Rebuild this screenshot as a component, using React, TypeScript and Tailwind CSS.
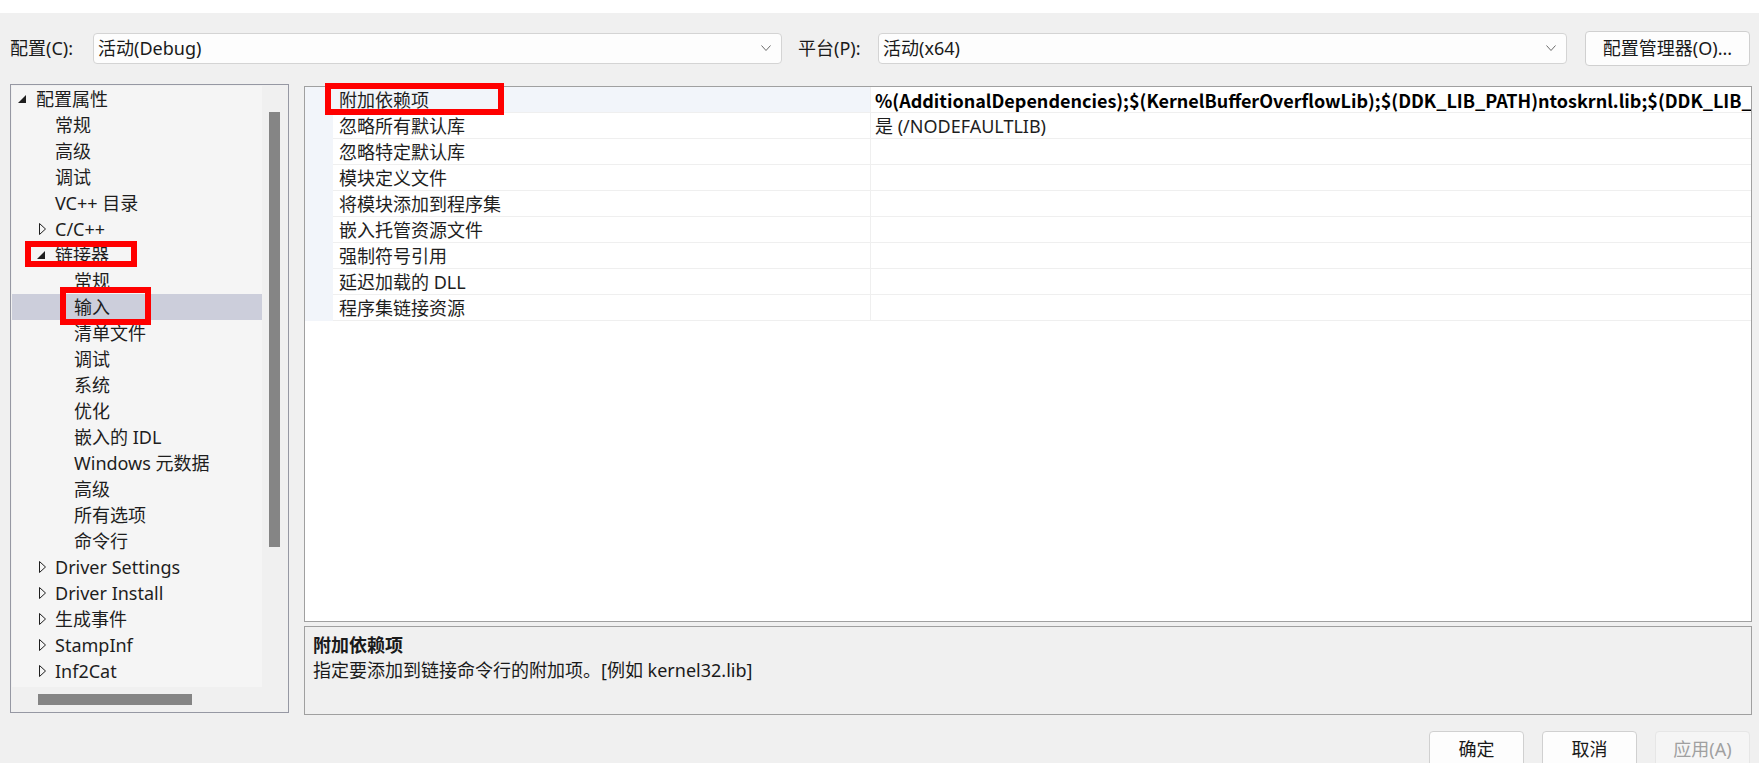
import React from 'react';

type TreeNode = {
  label: string;
  level: 0 | 1 | 2;
  expander?: 'open' | 'closed';
  selected?: boolean;
};

const treeNodes: TreeNode[] = [
  { label: '配置属性', level: 0, expander: 'open' },
  { label: '常规', level: 1 },
  { label: '高级', level: 1 },
  { label: '调试', level: 1 },
  { label: 'VC++ 目录', level: 1 },
  { label: 'C/C++', level: 1, expander: 'closed' },
  { label: '链接器', level: 1, expander: 'open' },
  { label: '常规', level: 2 },
  { label: '输入', level: 2, selected: true },
  { label: '清单文件', level: 2 },
  { label: '调试', level: 2 },
  { label: '系统', level: 2 },
  { label: '优化', level: 2 },
  { label: '嵌入的 IDL', level: 2 },
  { label: 'Windows 元数据', level: 2 },
  { label: '高级', level: 2 },
  { label: '所有选项', level: 2 },
  { label: '命令行', level: 2 },
  { label: 'Driver Settings', level: 1, expander: 'closed' },
  { label: 'Driver Install', level: 1, expander: 'closed' },
  { label: '生成事件', level: 1, expander: 'closed' },
  { label: 'StampInf', level: 1, expander: 'closed' },
  { label: 'Inf2Cat', level: 1, expander: 'closed' },
];

const levelPadding = ['pl-[5px]', 'pl-[24px]', 'pl-[43px]'];

const properties: { name: string; value: string; bold?: boolean }[] = [
  {
    name: '附加依赖项',
    value:
      '%(AdditionalDependencies);$(KernelBufferOverflowLib);$(DDK_LIB_PATH)ntoskrnl.lib;$(DDK_LIB_PATH)hal.lib;$(DDK_LIB_PATH)wmilib.lib',
    bold: true,
  },
  { name: '忽略所有默认库', value: '是 (/NODEFAULTLIB)' },
  { name: '忽略特定默认库', value: '' },
  { name: '模块定义文件', value: '' },
  { name: '将模块添加到程序集', value: '' },
  { name: '嵌入托管资源文件', value: '' },
  { name: '强制符号引用', value: '' },
  { name: '延迟加载的 DLL', value: '' },
  { name: '程序集链接资源', value: '' },
];

function Chevron() {
  return (
    <svg width="10" height="6" viewBox="0 0 10 6" className="shrink-0">
      <polyline points="0.5,0.5 5,5.5 9.5,0.5" fill="none" stroke="#6b6b6b" strokeWidth="1" />
    </svg>
  );
}

function Dropdown({ value }: { value: string }) {
  return (
    <div className="flex h-[31px] w-[689px] items-center justify-between rounded-[4px] border border-[#d4d4d4] bg-[#fdfdfd] pl-[4px] pr-[10px]">
      <span className="text-[#1a1a1a]">{value}</span>
      <Chevron />
    </div>
  );
}

function Expander({ kind }: { kind: 'open' | 'closed' }) {
  if (kind === 'open') {
    return (
      <svg width="8" height="8" viewBox="0 0 8 8" className="ml-[1px]">
        <polygon points="8,0 8,8 0,8" fill="#1e1e1e" />
      </svg>
    );
  }
  return (
    <svg width="7" height="12" viewBox="0 0 7 12" className="ml-[3px]">
      <polygon points="0.5,0.5 6.5,6 0.5,11.5" fill="none" stroke="#1e1e1e" strokeWidth="1" />
    </svg>
  );
}

function TreePanel() {
  return (
    <div className="flex h-[629px] w-[279px] shrink-0 flex-col border border-[#9698a3] p-[1px] pb-0 pt-[1px]">
      <div className="flex h-[601px]">
        <div className="w-[250px] bg-[#f5f5f5]">
          {treeNodes.map((node, i) => (
            <div
              key={i}
              className={`flex h-[26px] items-center ${levelPadding[node.level]} ${
                node.selected ? 'bg-[#cccedb]' : ''
              }`}
            >
              <div className="flex w-[19px] shrink-0 items-center">
                {node.expander && <Expander kind={node.expander} />}
              </div>
              <span className="whitespace-nowrap text-[#1e1e1e]">{node.label}</span>
            </div>
          ))}
        </div>
        <div className="w-[25px] pl-[7px] pt-[26px]">
          <div className="h-[435px] w-[11px] bg-[#858585]" />
        </div>
      </div>
      <div className="h-[25px] pl-[26px] pt-[7px]">
        <div className="h-[11px] w-[154px] bg-[#858585]" />
      </div>
    </div>
  );
}

function PropertyGrid() {
  return (
    <div className="h-[536px] overflow-hidden border border-[#a0a0a0] bg-white">
      {properties.map((p, i) => (
        <div key={i} className="flex h-[26px]">
          <div className="w-[28px] shrink-0 bg-[#f2f5fa]" />
          <div
            className={`flex w-[538px] shrink-0 items-center border-b border-r border-[#efefef] pl-[6px] text-[#1e1e1e] ${
              i === 0 ? 'bg-[#f2f5fa]' : ''
            }`}
          >
            <span className="whitespace-nowrap">{p.name}</span>
          </div>
          <div className="flex min-w-0 flex-1 items-center overflow-hidden border-b border-[#efefef] pl-[4px]">
            <span
              className={`whitespace-nowrap ${
                p.bold ? "font-['Noto_Sans_CJK_SC',sans-serif] font-bold text-black" : 'text-[#1e1e1e]'
              }`}
            >
              {p.value}
            </span>
          </div>
        </div>
      ))}
    </div>
  );
}

function Description() {
  return (
    <div className="h-[89px] border border-[#a0a0a0] bg-[#f0f0f0] pl-[8px] pt-[6px] leading-[25px] text-[#1a1a1a]">
      <div className="font-bold">附加依赖项</div>
      <div>指定要添加到链接命令行的附加项。[例如 kernel32.lib]</div>
    </div>
  );
}

function DialogButton({ label, disabled }: { label: string; disabled?: boolean }) {
  return (
    <button
      className={`flex h-[36px] w-[95px] items-center justify-center rounded-[4px] border ${
        disabled
          ? 'border-[#e6e6e6] bg-[#f5f5f5] text-[#a0a0a0]'
          : 'border-[#d0d0d0] bg-[#fdfdfd] text-[#1a1a1a]'
      }`}
    >
      {label}
    </button>
  );
}

export default function App() {
  return (
    <div className="relative h-[763px] w-[1759px] overflow-hidden bg-[#f0f0f0] font-['Noto_Sans','Noto_Sans_CJK_SC',sans-serif] text-[18px] leading-[26px]">
      <div className="h-[13px] bg-white" />

      <div className="mt-[17px] flex h-[36px] items-center pl-[10px]">
        <span className="w-[83px] text-[#1a1a1a]">配置(C):</span>
        <Dropdown value="活动(Debug)" />
        <span className="ml-[16px] w-[80px] text-[#1a1a1a]">平台(P):</span>
        <Dropdown value="活动(x64)" />
        <button className="ml-[18px] flex h-[35px] w-[165px] items-center justify-center rounded-[4px] border border-[#d0d0d0] bg-[#fdfdfd] text-[#1a1a1a]">
          配置管理器(O)...
        </button>
      </div>

      <div className="mt-[18px] flex h-[631px] items-start pl-[10px]">
        <TreePanel />
        <div className="ml-[15px] mt-[2px] flex w-[1448px] flex-col gap-[4px]">
          <PropertyGrid />
          <Description />
        </div>
      </div>

      <div className="mt-[16px] flex justify-end gap-[18px] pr-[9px]">
        <DialogButton label="确定" />
        <DialogButton label="取消" />
        <DialogButton label="应用(A)" disabled />
      </div>

      {/* red annotation boxes drawn over the screenshot */}
      <div className="pointer-events-none absolute left-[25px] top-[241px] h-[26px] w-[112px] border-[6px] border-[#ff0000]" />
      <div className="pointer-events-none absolute left-[60px] top-[287px] h-[38px] w-[91px] border-[6px] border-[#ff0000]" />
      <div className="pointer-events-none absolute left-[325px] top-[83px] h-[32px] w-[179px] border-[6px] border-[#ff0000]" />
    </div>
  );
}
